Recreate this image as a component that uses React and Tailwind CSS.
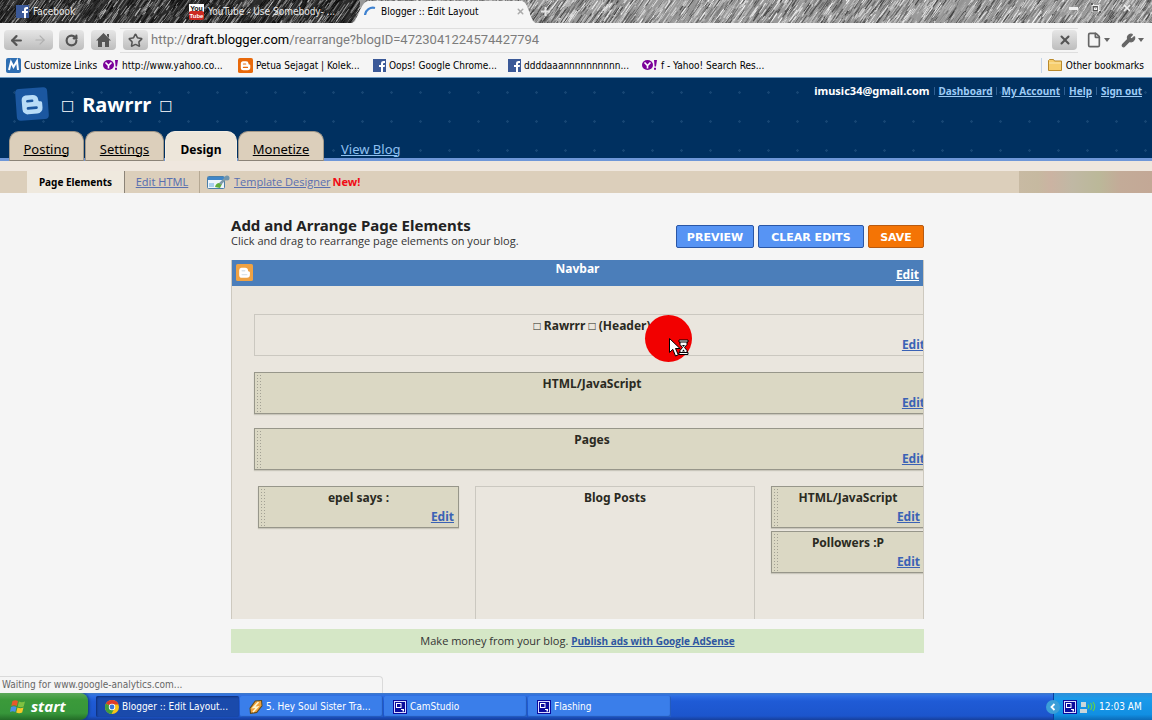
import React from 'react';
import { ArrowLeft, ArrowRight, RotateCw, Star, X, File, Wrench } from 'lucide-react';

const BOOKMARKS = [
  { label: 'Customize Links', icon: 'm', width: 'w-[97px]' },
  { label: 'http://www.yahoo.co...', icon: 'yahoo', width: 'w-[135px]' },
  { label: 'Petua Sejagat | Kolek...', icon: 'blogger', width: 'w-[135px]' },
  { label: 'Oops! Google Chrome...', icon: 'facebook', width: 'w-[135px]' },
  { label: 'ddddaaannnnnnnnnn...', icon: 'facebook', width: 'w-[134px]' },
  { label: 'f - Yahoo! Search Res...', icon: 'yahoo', width: 'w-[135px]' },
];

const ACCOUNT_LINKS = ['Dashboard', 'My Account', 'Help', 'Sign out'];

const TABS = [
  { label: 'Posting', width: 'w-[75px]' },
  { label: 'Settings', width: 'w-[79px]' },
  { label: 'Design', width: 'w-[72px]', active: true },
  { label: 'Monetize', width: 'w-[86px]' },
];

const TASKS = [
  { label: 'Blogger :: Edit Layout...', icon: 'chrome', active: true },
  { label: '5. Hey Soul Sister Tra...', icon: 'winamp' },
  { label: 'CamStudio', icon: 'cam' },
  { label: 'Flashing', icon: 'cam' },
];

// Small seeded generator so the sketch texture is the same on every render
function makeStrokes(count) {
  let seed = 4271;
  const rand = () => {
    seed = (seed * 16807) % 2147483647;
    return seed / 2147483647;
  };
  return Array.from({ length: count }, () => {
    const x = rand() * 1180 - 14;
    const y = rand() * 34 - 8;
    const len = 4 + rand() * 9;
    const level = x < 355 ? Math.floor(10 + rand() ** 2 * 190) : Math.floor(60 + rand() * 190);
    return { x, y, len, w: 0.6 + rand() * 0.6, tone: `rgb(${level},${level},${level})` };
  });
}

const STROKES = makeStrokes(5000);

function SketchTexture() {
  return (
    <svg className="absolute inset-0 h-full w-full" viewBox="0 0 1152 23" preserveAspectRatio="xMinYMin slice" aria-hidden="true">
      <rect width="1152" height="23" fill="#999" />
      <rect width="360" height="23" fill="#2a2a2a" />
      {STROKES.map((s, i) => (
        <line key={i} x1={s.x} y1={s.y + s.len} x2={s.x + s.len * 0.7} y2={s.y} stroke={s.tone} strokeWidth={s.w} />
      ))}
    </svg>
  );
}

function BloggerB({ fill = '#fff', hole = '#f57d00' }) {
  return (
    <>
      <path d="M5 3.5h3.6a2.7 2.7 0 0 1 2.7 2.6c0 .6.3.9.9.9.6 0 .9.3.9.9v2.3A2.8 2.8 0 0 1 10.300 13H5.700A2.700 2.700 0 0 1 3 10.300V5.800A2.400 2.400 0 0 1 5 3.500z" fill={fill} />
      <path d="M5.800 6.400h2.400M5.800 10h4.300" stroke={hole} strokeWidth="1.300" strokeLinecap="round" />
    </>
  );
}

function SiteIcon({ name }) {
  switch (name) {
    case 'facebook':
      return (
        <svg className="h-[13px] w-[13px] shrink-0" viewBox="0 0 13 13" aria-hidden="true">
          <rect width="13" height="13" fill="#3b5998" />
          <path d="M8 13V8H6V6h2V4.500C8 2.800 9 2 10.500 2H12v2h-1c-.7 0-1 .3-1 .9V6h2l-.3 2H10v5z" fill="#fff" />
        </svg>
      );
    case 'yahoo':
      return (
        <svg className="h-4 w-4 shrink-0" viewBox="0 0 16 16" aria-hidden="true">
          <ellipse cx="5.500" cy="8" rx="5.500" ry="5" fill="#7b0099" />
          <path d="M2.500 5.500l3 3L8.500 5.500M5.500 8.500V11.500" stroke="#fff" strokeWidth="1.600" fill="none" />
          <path d="M12 3h3l-1 6.500h-1.400zM12 10.800h2v2h-2z" fill="#7b0099" />
        </svg>
      );
    case 'blogger':
      return (
        <svg className="h-[15px] w-[15px] shrink-0" viewBox="0 0 16 16" aria-hidden="true">
          <rect width="16" height="16" rx="2" fill="#e8690b" />
          <BloggerB hole="#e8690b" />
        </svg>
      );
    default:
      return (
        <svg className="h-[15px] w-[15px] shrink-0" viewBox="0 0 15 15" aria-hidden="true">
          <rect width="15" height="15" rx="2" fill="#2f6fb3" />
          <path d="M3 12L5 4l2.500 5L11 3l1 9" stroke="#fff" strokeWidth="2" fill="none" />
        </svg>
      );
  }
}

function TaskIcon({ name }) {
  if (name === 'chrome') {
    return (
      <svg className="h-[14px] w-[14px] shrink-0" viewBox="0 0 14 14" aria-hidden="true">
        <circle cx="7" cy="7" r="7" fill="#f5c518" />
        <path d="M7 7L.9 3.600A7 7 0 0 1 13.500 4.500H7z" fill="#dd3b2a" />
        <path d="M7 7L.9 3.600A7 7 0 0 0 6.500 14L9 9z" fill="#3f9f3f" />
        <circle cx="7" cy="7" r="3.200" fill="#fff" />
        <circle cx="7" cy="7" r="2.400" fill="#3a78d8" />
      </svg>
    );
  }
  if (name === 'winamp') {
    return (
      <svg className="h-[14px] w-[14px] shrink-0" viewBox="0 0 14 14" aria-hidden="true">
        <path d="M6 .5L13 0l.5 6L8 13l-7 1-.5-6z" fill="#5a4a20" />
        <path d="M6.500 1.500L12 1l.5 4.500-5 6.500-5.500.8L1.500 8.500z" fill="#f0a03a" />
        <path d="M9.500 2L4.500 7.500l4-.5L4 12" stroke="#fff6d0" strokeWidth="1.600" fill="none" />
      </svg>
    );
  }
  return (
    <svg className="h-[14px] w-[14px] shrink-0" viewBox="0 0 14 14" aria-hidden="true">
      <rect width="14" height="14" fill="#0b0b9c" />
      <rect x="1.500" y="1.500" width="11" height="11" fill="none" stroke="#d9dcff" />
      <rect x="3.500" y="3.500" width="4.500" height="4" fill="none" stroke="#fff" />
      <path d="M8 9h3v2.500H9.500V10H8z" fill="#fff" />
    </svg>
  );
}

function TabStrip() {
  return (
    <div className="relative flex h-[23px] items-end overflow-hidden text-[10px] text-[#e8e8e8]">
      <SketchTexture />
      <button type="button" className="relative flex h-full w-[172px] items-center gap-1 pl-4">
        <SiteIcon name="facebook" />
        <span>Facebook</span>
      </button>
      <button type="button" className="relative flex h-full w-[180px] items-center gap-1 pl-[17px]">
        <svg className="h-[16px] w-[15px] shrink-0" viewBox="0 0 15 16" aria-hidden="true">
          <rect width="15" height="8" fill="#fff" />
          <rect y="7" width="15" height="9" rx="2" fill="#cc2a22" />
          <text x="7.500" y="6.500" fontSize="7" fontWeight="bold" textAnchor="middle" fill="#111" fontFamily="Liberation Sans, sans-serif">You</text>
          <text x="7.500" y="14" fontSize="6" fontWeight="bold" textAnchor="middle" fill="#fff" fontFamily="Liberation Sans, sans-serif">Tube</text>
        </svg>
        <span className="whitespace-nowrap">YouTube - Use Somebody- ...</span>
      </button>
      <div className="relative flex h-full w-[184px] items-center">
        <svg className="absolute inset-0 h-full w-full" viewBox="0 0 184 22" preserveAspectRatio="none" aria-hidden="true">
          <path d="M0 22C6 21 8 2 16 1H170C177 2 178 21 184 22z" fill="#f5f5f5" />
        </svg>
        <button type="button" className="relative flex flex-1 items-center pl-3 text-black">
          <svg className="h-[14px] w-[14px]" viewBox="0 0 14 14" aria-hidden="true">
            <path d="M1 10A8 8 0 0 1 11 3" stroke="#3f82d0" strokeWidth="2.200" fill="none" />
          </svg>
          <span className="pl-[3px]">Blogger :: Edit Layout</span>
        </button>
        <button type="button" aria-label="Close tab" className="relative mr-[11px] text-[#aaa]">
          <X size={9} strokeWidth={4} />
        </button>
      </div>
      <button type="button" aria-label="New tab" className="relative h-full pl-[5px] text-[#e2e2e2]">
        <svg className="h-[9px] w-[9px]" viewBox="0 0 9 9" aria-hidden="true">
          <path d="M4.500 0v9M0 4.500h9" stroke="currentColor" strokeWidth="2" />
        </svg>
      </button>
      <div className="relative ml-auto flex h-full items-start gap-[13px] pt-[3px] pr-5 text-[#f0f0f0]">
        <button type="button" aria-label="Minimize" className="mt-1 h-[3px] w-[9px] bg-[#f0f0f0]" />
        <button type="button" aria-label="Restore">
          <svg className="h-[10px] w-[10px]" viewBox="0 0 10 10" aria-hidden="true">
            <rect width="10" height="10" fill="#555" />
            <path d="M2.500 2.500V1H9v6.500H7.500M1 2.500h6.500V9H1zM3.500 5h2v1.500h-2z" stroke="currentColor" strokeWidth="1.200" fill="none" />
          </svg>
        </button>
        <button type="button" aria-label="Close" className="pl-2">
          <X size={10} strokeWidth={4} />
        </button>
      </div>
    </div>
  );
}

const TOOL_BUTTON = 'flex h-5 items-center justify-center rounded-sm bg-[linear-gradient(#e6e6e6,#bdbdbd)] text-[#555]';

function Toolbar() {
  return (
    <div className="flex h-[31px] items-center bg-[#f5f5f5] pt-[3px] pr-2 pl-1">
      <div className={`${TOOL_BUTTON} w-[49px]`}>
        <button type="button" aria-label="Back" className="w-6 pl-1"><ArrowLeft size={15} strokeWidth={3.500} /></button>
        <button type="button" aria-label="Forward" className="w-6 pl-1 text-[#b0b0b0]"><ArrowRight size={14} strokeWidth={2} /></button>
      </div>
      <button type="button" aria-label="Reload" className={`${TOOL_BUTTON} ml-[6px] w-[25px]`}><RotateCw size={13} strokeWidth={4} /></button>
      <button type="button" aria-label="Home" className={`${TOOL_BUTTON} ml-[7px] w-[25px]`}>
        <svg className="h-[15px] w-[15px]" viewBox="0 0 15 15" aria-hidden="true">
          <path d="M7.500 0L15 7.500h-2V14H9V9H6v5H2V7.500H0L7.500 0zM11 1h2v4l-2-2z" fill="currentColor" />
        </svg>
      </button>
      <div className="ml-1 flex h-[25px] min-w-0 flex-1 items-center border-y border-[#dedede]">
        <button type="button" aria-label="Bookmark this page" className={`${TOOL_BUTTON} ml-[3px] w-[25px]`}><Star size={15} strokeWidth={2.500} /></button>
        <div className="relative ml-[3px] h-full flex-1 font-['Roboto',sans-serif] text-[13px]">
          <input
            type="text"
            aria-label="Address"
            defaultValue="http://draft.blogger.com/rearrange?blogID=4723041224574427794"
            className="h-full w-full bg-transparent text-transparent outline-none"
          />
          {/* the input has one colour, so the highlighted host is drawn over it */}
          <div aria-hidden="true" className="pointer-events-none absolute inset-0 flex items-center text-[#7c7c7c]">
            http://<span className="text-black">draft.blogger.com</span>/rearrange?blogID=4723041224574427794
          </div>
        </div>
        <button type="button" aria-label="Stop" className={`${TOOL_BUTTON} mr-px w-[25px]`}><X size={14} strokeWidth={3.500} /></button>
      </div>
      <button type="button" aria-label="Page menu" className="ml-2 flex items-center gap-[2px] text-[#666]">
        <File size={16} strokeWidth={2.500} />
        <span className="border-x-[3px] border-t-[4px] border-x-transparent border-t-[#666]" />
      </button>
      <button type="button" aria-label="Tools menu" className="ml-[11px] flex items-center gap-[2px] text-[#666]">
        <Wrench size={15} strokeWidth={2} fill="currentColor" />
        <span className="border-x-[3px] border-t-[4px] border-x-transparent border-t-[#666]" />
      </button>
    </div>
  );
}

function BookmarkBar() {
  return (
    <div className="flex h-6 items-center border-b border-[#6f9cc4] bg-[#f5f5f5] pr-2 pb-px pl-[6px] text-[10px] text-black">
      {BOOKMARKS.map((b) => (
        <a key={b.label} href="#" className={`flex shrink-0 items-center gap-[3px] whitespace-nowrap ${b.width}`}>
          <SiteIcon name={b.icon} />
          {b.label}
        </a>
      ))}
      <a href="#" className="ml-auto flex items-center gap-1 border-l border-[#c5d5e8] pl-[6px] whitespace-nowrap">
        <svg className="h-3 w-[14px]" viewBox="0 0 14 12" aria-hidden="true">
          <path d="M.5 11.500v-10l1-1h4l1 1.500h7v9.500z" fill="#f6cd6c" stroke="#b98a2c" />
          <path d="M1 4h12" stroke="#fbe7ae" />
        </svg>
        Other bookmarks
      </a>
    </div>
  );
}

function BlogHeader() {
  return (
    <header className="flex h-[83px] flex-col justify-between border-b-[3px] border-[#6f97d8] bg-[#003060] bg-[radial-gradient(#164573_1px,transparent_1.500px)] bg-[length:29px_29px]">
      <div className="flex justify-between pr-[10px] pl-[15px]">
        <div className="flex items-center gap-3 pt-[9px]">
          <svg className="h-[34px] w-[34px]" viewBox="0 0 34 34" aria-hidden="true">
            <rect x="1" y="1" width="32" height="32" rx="4" fill="#1b57a0" transform="rotate(-4 17 17)" />
            <g transform="translate(1 1) rotate(-5 16 16) scale(2)">
              <BloggerB fill="#b9dcf7" hole="#1b57a0" />
            </g>
          </svg>
          <h1 className="flex items-center gap-2 pt-px font-['Noto_Sans','DejaVu_Sans',sans-serif] text-[20px] leading-6 font-bold text-white">
            <span className="text-[14px]">□</span>Rawrrr<span className="text-[14px]">□</span>
          </h1>
        </div>
        <div className="flex items-start pt-[6px] text-[10px] leading-[14px] font-bold text-[#9dcbf5]">
          <span className="text-[11px] text-white">imusic34@gmail.com</span>
          {ACCOUNT_LINKS.map((link) => (
            <React.Fragment key={link}>
              <span className="mx-1 mt-[3px] h-2 w-px bg-[#2f5f92]" />
              <a href="#" className="underline">{link}</a>
            </React.Fragment>
          ))}
        </div>
      </div>
      <nav className="-mb-[3px] flex h-[30px] items-end gap-px pl-[9px] text-[13px]">
        {TABS.map((tab) => (
          <a
            key={tab.label}
            href="#"
            className={`flex h-[30px] items-center justify-center rounded-t-[10px] border-x border-t text-black ${tab.width} ${
              tab.active ? 'border-[#f3ede2] bg-[#ede6da] pt-[6px] text-[12px] font-bold' : 'border-[#a3998a] border-b border-b-[#8b8378] bg-[#dccfbb] pt-[7px] underline'
            }`}
          >
            {tab.label}
          </a>
        ))}
        <a href="#" className="ml-4 pb-[2px] text-[#8fc0f0] underline">View Blog</a>
      </nav>
    </header>
  );
}

function SubNav() {
  return (
    <div className="border-t-[10px] border-[#efe7de] bg-[#dccfbb]">
      <nav className="flex h-[22px] items-stretch pl-[27px] text-[11px]">
        <a href="#" className="flex w-[98px] items-center justify-center border-r border-[#8b8378] bg-[#efe9de] text-[10px] font-bold text-black">Page Elements</a>
        <a href="#" className="flex w-[75px] items-center justify-center border-r border-[#b5a893] text-[#5a70b0] underline">Edit HTML</a>
        <div className="flex items-center pl-[7px]">
          <svg className="h-[15px] w-[23px]" viewBox="0 0 23 15" aria-hidden="true">
            <rect x=".5" y="1.500" width="17" height="12" rx="1" fill="#eef4fb" stroke="#4a7fa8" />
            <path d="M1 2h16v3H1z" fill="#3f86c8" />
            <path d="M2 8h5v4H2z" fill="#a9d0ee" />
            <path d="M8 12c1-4 4-5 7-3l-2 4z" fill="#5fae3a" />
            <path d="M13 9l6-6" stroke="#7d9aa8" strokeWidth="2.500" />
            <circle cx="20" cy="3" r="2.500" fill="#6f95ad" />
          </svg>
          <a href="#" className="pl-1 font-['Open_Sans',sans-serif] text-[#5a70b0] underline">Template Designer</a>
          <span className="pl-[2px] font-bold text-[#f00a14]">New!</span>
        </div>
        <div className="ml-auto w-[133px] bg-[linear-gradient(90deg,#c8baa3,#c6b9a0_14%,#cbb3a2_24%,#c0b8a4_40%,#bbb899_60%,#c3ab98_76%,#c3a896)]" />
      </nav>
    </div>
  );
}

function Gadget({ title, width, handle = true, locked = false }) {
  return (
    <div className={`relative h-[42px] shrink-0 border text-center text-[12px] leading-[14px] font-bold text-[#2a2a22] ${width} ${locked ? 'border-[#cbc8c0]' : 'border-[#97968a] bg-[#dbd8c4] shadow-[0_1px_1px_#c9c6bb]'}`}>
      {handle && <div className="absolute inset-y-px left-px w-[6px] bg-[radial-gradient(#a3a194_1px,transparent_1px)] bg-[length:3px_3px]" />}
      <div className="pt-[4px]">{title}</div>
      <div className="mt-[5px] pr-1 text-right">
        <a href="#" className="text-[#3a62b5] underline">Edit</a>
      </div>
    </div>
  );
}

function BusyPointer() {
  return (
    <div className="absolute top-[55px] left-[413px] h-[47px] w-[47px] rounded-full bg-[#f20000]">
      <svg className="absolute top-[23px] left-[24px] h-[20px] w-[21px]" viewBox="0 0 21 20" aria-hidden="true">
        <path d="M.5.5v14l3.300-3.200L6.500 18l2.800-1.200L6.500 10.500H11z" fill="#fff" stroke="#000" />
        <path d="M11 3.500h7v3l-2.500 3 2.500 3V15h-7v-2.500l2.500-3-2.500-3z" fill="#fff" stroke="#000" />
        <path d="M10 2h9v2h-9zM10 14.500h9v2h-9z" fill="#fff" stroke="#000" />
        <path d="M13 7h3l-1.500 2zM13 13.500l1.500-2 1.500 2z" fill="#000" />
      </svg>
    </div>
  );
}

function LayoutCanvas() {
  return (
    <section className="relative mt-3 overflow-hidden border-x border-[#cdc9bf] bg-[#eae6de]">
      <div className="-mx-px flex h-[26px] items-start bg-[#4b7eba] px-[5px] text-[12px] leading-[14px] font-bold text-white">
        <div className="flex-1 pt-1">
          <svg className="h-[17px] w-[17px]" viewBox="0 0 16 16" aria-hidden="true">
            <rect width="16" height="16" rx="1.500" fill="#efa243" />
            <BloggerB hole="#d9e3ea" />
          </svg>
        </div>
        <div className="pt-[2px]">Navbar</div>
        <div className="flex-1 pt-2 text-right"><a href="#" className="underline">Edit</a></div>
      </div>
      <div className="flex flex-col pt-7 pl-[22px]">
        <Gadget title="□ Rawrrr □ (Header)" width="w-[676px]" handle={false} locked />
        <div className="flex flex-col gap-[14px] pt-4">
          <Gadget title="HTML/JavaScript" width="w-[676px]" />
          <Gadget title="Pages" width="w-[676px]" />
        </div>
        <div className="flex h-[149px] gap-4 pt-4 pl-1">
          <Gadget title="epel says :" width="w-[201px]" />
          <div className="w-[280px] shrink-0 border border-b-0 border-[#cbc8c0] pt-1 text-center text-[12px] leading-[14px] font-bold text-[#2a2a22]">Blog Posts</div>
          <div className="flex flex-col gap-[3px]">
            <Gadget title="HTML/JavaScript" width="w-[154px]" />
            <Gadget title="Pollowers :P" width="w-[154px]" />
          </div>
        </div>
      </div>
      <BusyPointer />
    </section>
  );
}

const ACTION_BUTTON = 'h-[23px] rounded-xs border pt-[2px] leading-4';

function Editor() {
  return (
    <main className="relative flex-1 bg-[#f5f5f5] pl-[3px]">
      <div className="mx-auto max-w-[693px] pt-6 font-['Open_Sans',sans-serif]">
        <div className="flex items-start justify-between">
          <div>
            <h2 className="font-['Noto_Sans',sans-serif] text-[15px] leading-4 font-bold text-[#222]">Add and Arrange Page Elements</h2>
            <p className="text-[11px] leading-[15px] text-[#333]">Click and drag to rearrange page elements on your blog.</p>
          </div>
          <div className="flex gap-1 pt-2 font-['DejaVu_Sans',sans-serif] text-[11px] font-bold text-white">
            <button type="button" className={`${ACTION_BUTTON} w-[78px] border-[#2a56a5] bg-[#5794f4]`}>PREVIEW</button>
            <button type="button" className={`${ACTION_BUTTON} w-[106px] border-[#2a56a5] bg-[#5794f4]`}>CLEAR EDITS</button>
            <button type="button" className={`${ACTION_BUTTON} w-[56px] border-[#b85a10] bg-[#f47405]`}>SAVE</button>
          </div>
        </div>
        <div className="font-['Noto_Sans',sans-serif]">
          <LayoutCanvas />
        </div>
        <div className="mt-[10px] bg-[#d5e7c6] text-center text-[11px] leading-6 text-[#333]">
          Make money from your blog. <a href="#" className="text-[10px] font-bold text-[#2f56a0] underline">Publish ads with Google AdSense</a>
        </div>
      </div>
      <div className="absolute bottom-0 left-0 h-[17px] w-[383px] rounded-tr border-t border-r border-[#dadada] pl-[2px] text-[10px] leading-4 text-[#666]">
        Waiting for www.google-analytics.com...
      </div>
    </main>
  );
}

function Taskbar() {
  return (
    <footer className="flex h-[27px] items-stretch bg-[linear-gradient(#3f7ac8,#2f6fe4_10%,#1f5bd6_30%,#1c55cc_85%,#173f9c)] text-[10px] text-white">
      <button type="button" className="flex w-[88px] items-center gap-[5px] rounded-r-lg bg-[linear-gradient(#5da85a,#3b9a3a_25%,#37963a_75%,#236b27)] pl-[10px] font-['Open_Sans',sans-serif] text-[15px] font-bold italic shadow-[1px_0_3px_#123a70]">
        <svg className="h-[15px] w-[16px]" viewBox="0 0 16 15" aria-hidden="true">
          <path d="M2.500 2C4.500 1 6 1 8 2L6.800 7C5 6 3.300 6 1.300 7z" fill="#e8582a" />
          <path d="M9 2.500c2 1 3.700 1 6 0L13.700 7.500c-2 1-4 1-6 0z" fill="#7fc241" />
          <path d="M1 8c2-1 3.700-1 5.500 0L5.300 13C3.500 12 2 12 0 13z" fill="#4a90e8" />
          <path d="M7.500 8.500c2 1 3.800 1 6 0l-1.300 5c-2 1-4 1-6 0z" fill="#f8c828" />
        </svg>
        start
      </button>
      <div className="flex items-start gap-px pt-[3px] pl-2">
        {TASKS.map((task) => (
          <button
            key={task.label}
            type="button"
            className={`flex h-[21px] w-[143px] items-center gap-[3px] rounded-xs pl-[9px] whitespace-nowrap ${
              task.active ? 'bg-[#1a4aab] shadow-[inset_1px_1px_2px_#0e2f78]' : 'bg-[#3a7eea] shadow-[inset_-1px_-1px_1px_#2358b8]'
            }`}
          >
            <TaskIcon name={task.icon} />
            {task.label}
          </button>
        ))}
      </div>
      <div className="ml-auto flex w-[99px] items-center gap-[3px] border-l border-[#0c3f9c] bg-[linear-gradient(#2f8fd8,#1b9bea_20%,#118fe2_80%,#0c6cb8)]">
        <button type="button" aria-label="Show hidden icons" className="-ml-2 flex h-[14px] w-[14px] items-center justify-center rounded-full bg-[#3c9fd8]">
          <svg className="h-2 w-2" viewBox="0 0 8 8" aria-hidden="true">
            <path d="M5.500 1L2.500 4l3 3" stroke="#fff" strokeWidth="1.800" fill="none" />
          </svg>
        </button>
        <TaskIcon name="cam" />
        <svg className="h-3 w-4" viewBox="0 0 16 12" aria-hidden="true">
          <path d="M1 1h5v5H1zM0 8h7v4H0z" fill="#c9d6da" />
          <path d="M8 3.500q1.500 2 0 4M10.500 2q2.500 3.500 0 7M13 1q3.500 4.500 0 9" stroke="#5fd050" strokeWidth="1.200" fill="none" />
        </svg>
        <span className="whitespace-nowrap">12:03 AM</span>
      </div>
    </footer>
  );
}

export default function App() {
  return (
    <div className="flex min-h-screen flex-col overflow-hidden bg-[#f5f5f5] font-['DejaVu_Sans_Condensed','DejaVu_Sans',sans-serif]">
      <TabStrip />
      <Toolbar />
      <BookmarkBar />
      <div className="font-['Noto_Sans',sans-serif]">
        <BlogHeader />
        <SubNav />
      </div>
      <Editor />
      <Taskbar />
    </div>
  );
}
